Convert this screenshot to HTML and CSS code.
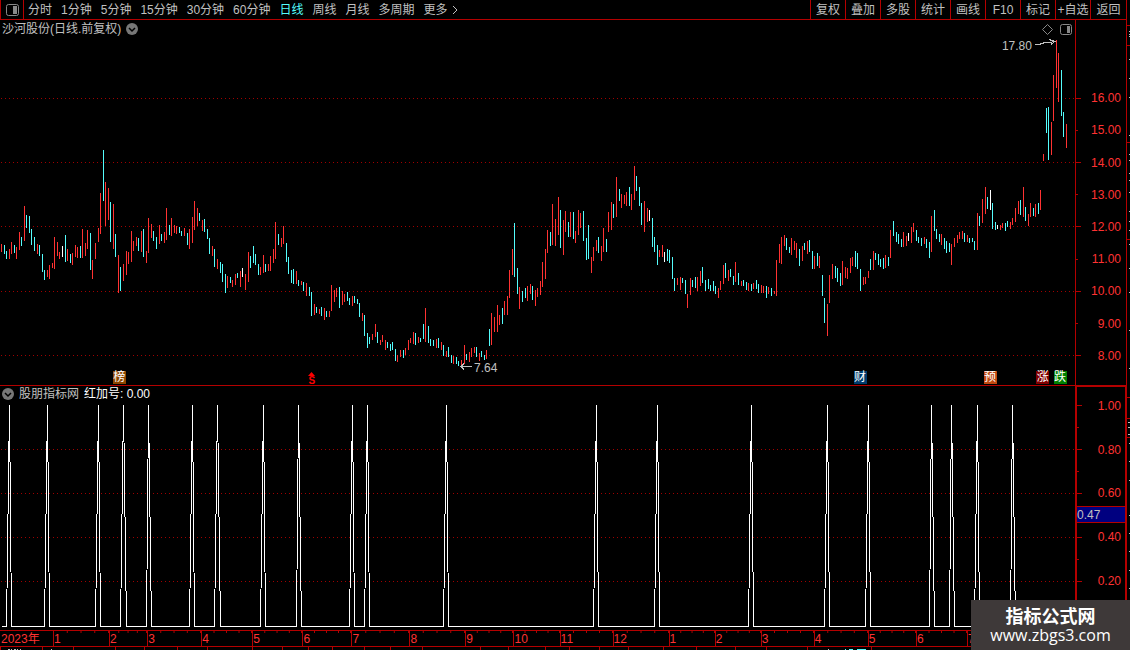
FILE: index.html
```
<!DOCTYPE html>
<html lang="zh-CN">
<head>
<meta charset="utf-8">
<title>沙河股份 日线</title>
<link rel="stylesheet" href="styles.css">
</head>
<body>
<div class="terminal">
  <header class="toolbar">
    <button class="panel-toggle" aria-label="侧栏">
      <svg width="13" height="12" viewBox="0 0 13 12"><rect x="0.5" y="0.5" width="12" height="11" rx="2" fill="none" stroke="#888"/><rect x="7" y="2" width="4" height="8" fill="#888"/></svg>
    </button>
    <nav class="periods">
      <button>分时</button>
      <button>1分钟</button>
      <button>5分钟</button>
      <button>15分钟</button>
      <button>30分钟</button>
      <button>60分钟</button>
      <button class="active">日线</button>
      <button>周线</button>
      <button>月线</button>
      <button>多周期</button>
      <button class="more">更多<svg width="6" height="10" viewBox="0 0 6 10"><path d="M1 1l4 4-4 4" fill="none" stroke="#c0c0c0"/></svg></button>
    </nav>
    <div class="tools">
      <button>复权</button>
      <button>叠加</button>
      <button>多股</button>
      <button>统计</button>
      <button>画线</button>
      <button>F10</button>
      <button>标记</button>
      <button>+自选</button>
      <button class="back">返回</button>
    </div>
  </header>

  <main class="workspace">
    <section class="pane price">
      <svg class="plot" id="price" viewBox="0 20 1075 365" preserveAspectRatio="none" shape-rendering="crispEdges">
        <path class="grid" d="M1 98.5H1075M1 162.5H1075M1 226.5H1075M1 291.5H1075M1 355.5H1075"/>
        <path class="bar up" id="up"/>
        <path class="bar down" id="down"/>
        <path class="bar flat" id="flat"/>
        <path class="arrow" d="M1035 44.5h4l6-2h4l6-1M1049 39.5l6 2-4 3"/>
        <path class="arrow" d="M461 366.5h11M464 363.5l-3 3 3 3"/>
      </svg>
      <div class="caption">
        <h1>沙河股份(日线.前复权)</h1>
        <button class="chevron" aria-label="展开"><svg width="12" height="12" viewBox="0 0 12 12"><circle cx="6" cy="6" r="6" fill="#777"/><path d="M3 5l3 3 3-3" fill="none" stroke="#000" stroke-width="1.5"/></svg></button>
        <div class="corner">
          <svg width="11" height="11" viewBox="0 0 11 11"><path d="M5.5 0.5l5 5-5 5-5-5z" fill="none" stroke="#888"/></svg>
          <svg width="12" height="11" viewBox="0 0 12 11"><rect x="0.5" y="0.5" width="11" height="10" rx="2" fill="none" stroke="#888"/><rect x="7" y="2" width="3" height="7" fill="#888"/></svg>
        </div>
      </div>
      <span class="note high" style="left:93.2%">17.80</span>
      <span class="note low" style="left:44.1%">7.64</span>
      <span class="pin rank" style="left:10.5%">榜</span>
      <span class="pin dividend" style="left:28.4%"><svg width="7" height="4" viewBox="0 0 7 4"><path d="M0 4L3.500 0L7 4z" fill="#f00"/></svg>S</span>
      <span class="pin finance" style="left:79.4%">财</span>
      <span class="pin forecast" style="left:91.5%">预</span>
      <span class="pin rise" style="left:96.4%">涨</span>
      <span class="pin fall" style="left:98%">跌</span>
    </section>
    <ol class="scale price-scale">
      <li>16.00</li><li>15.00</li><li>14.00</li><li>13.00</li><li>12.00</li><li>11.00</li><li>10.00</li><li>9.00</li><li>8.00</li>
    </ol>

    <section class="pane indicator">
      <svg class="plot" viewBox="0 386 1075 244" preserveAspectRatio="none" shape-rendering="crispEdges">
        <path class="grid" d="M1 449.5H1075M1 493.5H1075M1 537.5H1075M1 581.5H1075"/>
        <path class="signal" id="signal"/>
      </svg>
      <div class="caption">
        <button class="chevron" aria-label="展开"><svg width="12" height="12" viewBox="0 0 12 12"><circle cx="6" cy="6" r="6" fill="#777"/><path d="M3 5l3 3 3-3" fill="none" stroke="#000" stroke-width="1.5"/></svg></button>
        <h2>股朋指标网</h2>
        <span class="value">红加号: 0.00</span>
      </div>
    </section>
    <ol class="scale signal-scale">
      <li>1.00</li><li></li><li>0.80</li><li></li><li>0.60</li><li class="cursor">0.47</li><li>0.40</li><li></li><li>0.20</li>
    </ol>

    <div class="months" id="months"></div>
    <div class="months-end"></div>
    <svg class="peek-bottom" viewBox="0 646 1127 4" preserveAspectRatio="none" shape-rendering="crispEdges">
      <path stroke="#b40000" d="M0 646.5H1127M.5 647v3M42.500 647v3M73.500 647v3M115.500 647v3M144.500 647v3M177.500 647v3M207.500 647v3M252.500 647v3M282.500 647v3M308.500 647v3M332.500 647v3M364.500 647v3M390.500 647v3M422.500 647v3M480.500 647v3M508.500 647v3M545.500 647v3M569.500 647v3M599.500 647v3M628.500 647v3M663.500 647v3M696.500 647v3M735.500 647v3M766.500 647v3M807.500 647v3M871.500 647v3"/>
      <path stroke="#c0c0c0" d="M8 649.5h2M11 649.5h1M14 649.5h2M17 649.5h1M20 649.5h1M51 649.5h1M828 649.5h1"/>
      <path stroke="#54fcfc" d="M845 649.5h1M849 649.5h4M857 649.5h9"/>
    </svg>
    <svg class="peek-right" viewBox="0 20 3 630" preserveAspectRatio="none" shape-rendering="crispEdges">
      <path stroke="#b40000" d="M0 25.500h3M0 45.500h3M0 142.500h3M0 239.500h3M0 397.500h3M0 418.500h3M0 437.500h3"/>
      <path stroke="#c0c0c0" d="M2 31.500h1M2 34.500h1M2 36.500h1M2 59.500h1M2 78.500h1M2 97.500h1M2 135.500h1M2 154.500h1M2 160.500h1M2 173.500h1M2 180.500h1M2 192.500h1M2 211.500h1M2 221.500h1M2 230.500h1M2 244.500h1M2 268.500h1M2 292.500h1M2 330.500h1M2 368.500h1M1 422.500h2M1 427.500h2M1 434.500h2M2 443.500h1M2 461.500h1M2 480.500h1M2 515.500h1M2 533.500h1M2 551.500h1M2 570.500h1M2 588.500h1"/>
    </svg>
  </main>
  <aside class="site">
    <strong>指标公式网</strong>
    <span>www.zbgs3.com</span>
  </aside>
</div>
<script src="chart.js"></script>
</body>
</html>
```

FILE: styles.css
```
* {
  box-sizing: border-box;
}

body {
  margin: 0;
  background: #000;
  color: #c0c0c0;
  font: 12px/16px "Liberation Sans", "Noto Sans CJK SC", sans-serif;
}

button {
  margin: 0;
  padding: 0;
  border: 0;
  background: none;
  color: inherit;
  font: inherit;
  white-space: nowrap;
}

svg {
  display: block;
}

.terminal {
  display: flex;
  flex-direction: column;
  position: relative;
  height: 100vh;
  overflow: hidden;
}

.toolbar {
  display: flex;
  flex: none;
  height: 20px;
  margin-right: 3px;
  border-bottom: 1px solid #b40000;
}

.panel-toggle {
  display: flex;
  align-items: center;
  justify-content: center;
  width: 24px;
  border: 1px solid #b40000;
  border-width: 0 1px;
}

.periods {
  display: flex;
  align-items: center;
  gap: 9px;
  padding-left: 4px;
}

.periods .active {
  color: #54fcfc;
}

.more {
  display: flex;
  align-items: center;
  gap: 4px;
}

.tools {
  display: flex;
  margin-left: auto;
  border-right: 1px solid #b40000;
}

.tools button {
  width: 35px;
  border-left: 1px solid #b40000;
}

.tools .back {
  width: 36px;
}

.workspace {
  display: grid;
  flex: 1;
  min-height: 0;
  grid-template-columns: minmax(0, 1fr) 52px 3px;
  grid-template-rows: minmax(0, 366fr) minmax(0, 244fr) 16px 4px;
}

.pane {
  position: relative;
  grid-column: 1;
}

.price {
  border-bottom: 1px solid #b40000;
}

.plot {
  position: absolute;
  inset: 0;
  width: 100%;
  height: 100%;
}

.grid {
  stroke: #a00000;
  stroke-dasharray: 1 3;
}

.bar,
.signal,
.arrow {
  fill: none;
  stroke-width: 1;
}

.up {
  stroke: #ff3232;
}

.down {
  stroke: #54fcfc;
}

.flat,
.signal {
  stroke: #fff;
}

.arrow {
  stroke: #c0c0c0;
}

.caption {
  display: flex;
  position: relative;
  align-items: center;
  gap: 5px;
  padding: 1px 3px 0 2px;
}

.caption h1,
.caption h2 {
  margin: 0;
  font-size: 12px;
  font-weight: normal;
}

.indicator .caption {
  padding-top: 0;
}

.corner {
  display: flex;
  gap: 7px;
  margin-left: auto;
}

.value {
  color: #fff;
}

.note,
.pin {
  position: absolute;
}

.high {
  top: 18px;
}

.low {
  bottom: 9px;
}

.pin {
  bottom: 1px;
  width: 13px;
  height: 13px;
  color: #fff;
  line-height: 13px;
  text-align: center;
}

.rank {
  background: #8c4600;
}

.dividend {
  display: flex;
  flex-direction: column;
  align-items: center;
  justify-content: flex-end;
  bottom: 0;
  color: #f00;
  font-size: 10px;
  font-weight: bold;
  line-height: 9px;
}

.finance {
  background: #003c6e;
}

.forecast {
  background: #c04810;
}

.rise {
  background: #800000;
}

.fall {
  background: #008000;
}

.scale {
  display: flex;
  flex-direction: column;
  grid-column: 2;
  margin: 0;
  border: solid #b40000;
  color: #ff3232;
  list-style: none;
}

.scale li {
  display: flex;
  flex: 1;
  align-items: center;
  justify-content: space-between;
  min-height: 0;
  padding-right: 5px;
}

.scale li::before {
  width: 5px;
  height: 1px;
  background: #b40000;
  content: "";
}

.scale li:nth-child(even)::before {
  width: 2px;
}

.price-scale {
  padding: 62px 0 13px;
  border-width: 0 1px 1px;
}

.signal-scale {
  padding: 8px 0 38px;
  border-width: 1px 2px 0;
}

.signal-scale li {
  padding-right: 4px;
}

.signal-scale .cursor {
  flex: none;
  justify-content: flex-start;
  height: 17px;
  margin: 2px 0 3px;
  border: 1px solid #b40000;
  border-width: 1px 0;
  background: #000080;
  color: #c0c0c0;
}

.signal-scale .cursor::before {
  display: none;
}

.months {
  display: flex;
  grid-column: 1;
  border-top: 1px solid #b40000;
  color: #ff3232;
}

.month {
  flex-basis: 0;
  min-width: 0;
  border-left: 1px solid #b40000;
  background: linear-gradient(to left, #b40000 1px, transparent 1px) 0 0 / 25% 2px repeat-x;
  white-space: nowrap;
}

.month:first-child {
  padding-left: 1px;
  border-left: 0;
  background: none;
}

.months-end {
  grid-column: 2;
  border: solid #b40000;
  border-width: 1px 2px 0;
}

.peek-bottom {
  grid-row: 4;
  grid-column: 1 / 3;
  width: 100%;
  height: 4px;
}

.peek-right {
  grid-row: 1 / 5;
  grid-column: 3;
  width: 3px;
  height: 100%;
}

.site {
  display: flex;
  position: absolute;
  right: 0;
  bottom: 0;
  flex-direction: column;
  align-items: center;
  justify-content: center;
  width: 159px;
  height: 50px;
  background: #3e3939;
  color: #fff;
  font-family: "Open Sans", "Noto Sans CJK SC", sans-serif;
  font-size: 16px;
  line-height: 20px;
}

.site strong {
  font-family: "Noto Sans CJK SC", sans-serif;
  font-size: 18px;
}
```

FILE: chart.js
```
// Each bar: x, top, bottom, kind (r = up, c = down, w = flat)
const bars = `
1 244 252 r,4 245 254 c,6 251 259 c,9 249 259 r,11 242 254 r,14 245 253 c,16 247 259 r,19 232 250 r,21 237 246 c,24 206 241 r,
26 215 228 c,29 216 233 c,31 229 245 c,34 237 251 c,37 244 254 r,39 245 256 c,42 254 272 c,44 270 280 c,47 270 277 r,49 265 279 r,
52 263 268 r,54 237 269 r,57 242 256 r,59 252 259 r,62 246 257 w,65 235 262 c,67 249 261 r,70 254 263 c,72 253 265 r,75 245 257 r,
77 247 258 r,80 246 258 c,82 229 258 r,85 243 256 r,87 230 249 r,90 233 270 c,92 260 279 r,95 243 259 r,98 228 242 r,100 193 234 r,
103 150 201 c,105 182 226 r,108 188 220 r,110 202 242 c,113 204 249 r,115 234 257 c,118 255 293 r,120 267 291 c,123 264 281 r,126 251 275 r,
128 252 264 r,131 231 262 r,133 241 251 r,136 237 246 r,138 238 251 c,141 231 252 r,143 229 257 c,146 251 263 r,148 218 253 r,151 224 238 r,
153 231 241 c,156 237 249 c,159 225 244 r,161 234 241 c,164 232 243 r,166 208 240 r,169 225 235 c,171 218 236 r,174 225 233 r,176 226 234 r,
179 227 233 c,181 231 236 c,184 228 236 r,187 233 245 c,189 229 249 r,192 217 243 r,194 201 230 r,197 208 226 r,199 213 221 c,202 220 231 r,
204 219 232 c,207 229 239 c,209 238 254 c,212 246 256 r,214 249 267 c,217 259 269 r,220 262 273 c,222 264 282 c,225 274 293 c,227 276 288 r,
230 277 283 c,232 280 287 r,235 274 285 r,237 273 278 c,240 271 287 r,242 268 277 w,245 274 290 r,248 252 282 r,250 256 268 c,253 246 263 c,
255 254 265 c,258 264 275 c,260 267 275 r,263 255 273 r,265 264 272 c,268 264 271 r,270 256 271 r,273 249 263 r,275 222 259 r,278 234 245 c,
281 238 247 r,283 226 244 r,286 243 262 c,288 257 274 c,291 270 283 c,293 269 284 c,296 271 284 r,298 280 286 c,301 281 285 r,303 282 291 c,
306 283 296 r,309 287 296 c,311 292 316 c,314 304 315 r,316 307 313 c,319 309 314 r,321 307 316 c,324 308 320 r,326 311 317 c,329 311 317 r,
331 285 311 r,334 290 302 r,336 288 297 r,339 287 308 c,342 291 305 r,344 294 302 r,347 292 301 c,349 298 305 c,352 296 306 r,354 296 303 c,
357 299 304 c,359 303 317 c,362 313 321 r,364 315 336 c,367 333 348 c,369 337 344 c,372 334 340 r,375 324 337 r,377 332 343 c,380 340 345 r,
382 335 342 r,385 340 350 r,387 342 348 c,390 344 351 c,392 342 350 c,395 349 361 c,397 355 362 r,400 350 357 r,403 350 358 c,405 348 355 r,
408 340 350 r,410 338 343 r,413 332 344 r,415 333 345 c,418 337 343 r,420 338 342 c,423 324 339 c,425 308 342 r,428 326 343 c,430 339 346 c,
433 340 346 c,436 339 348 r,438 338 348 c,441 342 350 r,443 345 356 c,446 351 357 r,448 347 357 c,451 355 363 c,453 356 364 r,456 357 364 c,
458 361 366 c,461 360 366 r,464 345 364 r,466 354 360 c,469 352 362 r,471 348 357 r,474 347 353 r,476 347 357 c,479 353 361 r,481 351 357 c,
484 355 360 c,486 350 359 r,489 329 346 c,491 313 345 r,494 317 332 r,497 305 332 r,499 315 325 r,502 308 324 c,504 301 315 r,507 296 315 r,
509 270 298 r,512 249 275 r,514 223 277 c,517 268 294 c,519 287 309 r,522 291 302 c,525 288 298 c,527 286 301 r,530 284 294 r,532 286 300 c,
535 290 306 r,537 288 297 r,540 281 295 r,542 262 287 r,545 249 279 r,547 230 253 r,550 232 246 c,552 204 245 r,555 219 246 r,558 197 235 r,
560 210 248 c,563 220 255 r,565 211 232 r,568 222 237 c,570 212 237 r,573 212 239 c,575 231 243 r,578 210 235 r,580 213 228 r,583 211 241 c,
586 238 260 c,588 225 259 c,591 257 273 r,593 247 261 r,596 240 251 r,598 237 253 c,601 246 261 r,603 228 252 r,606 239 252 c,608 212 232 r,
611 202 230 r,613 204 218 c,616 177 217 r,619 189 201 c,621 194 208 r,624 195 204 r,626 192 206 r,629 187 206 c,631 194 210 r,634 166 200 r,
636 176 191 c,639 187 206 c,641 203 225 c,644 201 232 r,647 208 222 r,649 210 221 w,652 218 247 c,654 237 252 c,657 245 265 c,659 250 257 r,
662 245 257 r,664 252 262 w,667 249 261 c,669 250 263 c,672 257 279 c,674 278 291 c,677 278 285 r,680 277 290 r,682 278 283 c,685 280 294 c,
687 294 308 r,690 278 295 r,692 280 287 c,695 277 288 c,697 277 291 r,700 271 286 r,702 267 283 c,705 280 291 c,708 279 289 c,710 285 291 c,
713 281 291 c,715 286 294 c,718 288 298 r,720 281 290 r,723 265 284 r,725 263 278 c,728 270 281 r,730 269 277 c,733 276 285 c,735 262 282 r,
738 273 285 c,741 281 286 r,743 280 286 c,746 282 290 c,748 283 291 r,751 284 291 c,753 283 289 r,756 280 289 c,758 284 293 c,761 285 293 r,
763 286 293 r,766 286 298 c,768 287 294 r,771 288 296 c,774 291 294 r,776 260 296 r,779 244 263 r,781 237 264 r,784 235 246 r,786 238 250 c,
789 247 253 c,791 238 255 r,794 241 250 r,796 243 258 r,799 249 266 c,802 246 261 r,804 243 250 c,807 241 254 r,809 240 252 c,812 251 269 c,
814 256 269 r,817 253 266 c,819 256 268 r,822 275 296 c,824 298 323 c,827 304 336 r,829 275 303 r,832 264 279 r,835 266 278 c,837 268 282 c,
840 273 286 c,842 261 285 r,845 267 278 r,847 268 279 r,850 258 273 r,852 257 266 r,855 251 267 c,857 253 269 c,860 269 291 c,863 277 285 r,
865 277 284 r,868 271 278 r,870 259 270 c,873 251 270 r,875 253 260 c,878 254 265 c,880 259 267 c,883 258 269 c,885 255 268 r,888 257 266 c,
890 230 258 r,893 221 236 c,896 232 242 c,898 234 244 c,901 239 247 c,903 232 247 r,906 236 246 r,908 233 241 w,911 227 243 r,913 223 232 r,
916 230 241 c,918 237 243 c,921 238 246 c,924 237 244 r,926 239 248 c,929 242 258 c,931 216 252 r,934 210 231 c,936 229 239 c,939 234 242 c,
941 234 245 r,944 238 249 c,946 241 253 c,949 243 252 c,951 244 265 r,954 238 247 r,957 235 243 r,959 232 239 r,962 231 239 r,964 233 242 c,
967 235 242 r,969 238 243 c,972 238 242 c,974 241 250 c,977 213 250 r,979 216 226 c,982 199 223 r,985 187 214 r,987 197 209 c,990 190 210 w,
992 203 229 c,995 222 230 c,997 225 229 w,1000 225 230 r,1002 223 228 r,1005 223 231 c,1007 221 227 c,1010 222 229 r,1012 218 225 r,1015 208 222 r,
1018 201 214 r,1020 200 215 c,1023 187 217 r,1025 207 221 c,1028 214 226 r,1030 203 217 r,1033 208 216 c,1035 204 217 r,1038 203 214 c,1040 190 210 r,
1043 154 161 r,1046 108 133 c,1048 107 160 c,1051 122 155 r,1053 75 121 r,1056 40 88 r,1058 53 102 r,1061 70 116 c,1063 112 137 c,1066 124 148 r
`.trim().split(",").map((row) => row.trim().split(" "));

const paths = { r: "", c: "", w: "" };
for (const [x, top, bottom, kind] of bars) {
  paths[kind] += `M${x}.5 ${top}V${bottom}`;
}
document.getElementById("up").setAttribute("d", paths.r);
document.getElementById("down").setAttribute("d", paths.c);
document.getElementById("flat").setAttribute("d", paths.w);

// Bars on which the signal is 1; it is 0 on all others
const hits = new Set([9, 47, 98, 123, 148, 192, 217, 263, 298, 352, 367, 446, 596, 657, 751, 827, 868, 931, 951, 977, 1012]);
const points = bars.map(([x]) => `${x}.5 ${hits.has(Number(x)) ? 405 : 626.5}`);
document.getElementById("signal").setAttribute("d", "M" + points.join("L"));

// Month label and the number of pixels it spans at full width
const months = [["2023年", 53], ["1", 56], ["2", 38], ["3", 54], ["4", 51], ["5", 50], ["6", 49], ["7", 58], ["8", 56], ["9", 48], ["10", 46], ["11", 53], ["12", 56], ["1", 46], ["2", 46], ["3", 53], ["4", 54], ["5", 48], ["6", 51], ["7", 109]];
const axis = document.getElementById("months");
for (const [label, span] of months) {
  const cell = document.createElement("span");
  cell.className = "month";
  cell.style.flexGrow = span;
  cell.textContent = label;
  axis.append(cell);
}
```
